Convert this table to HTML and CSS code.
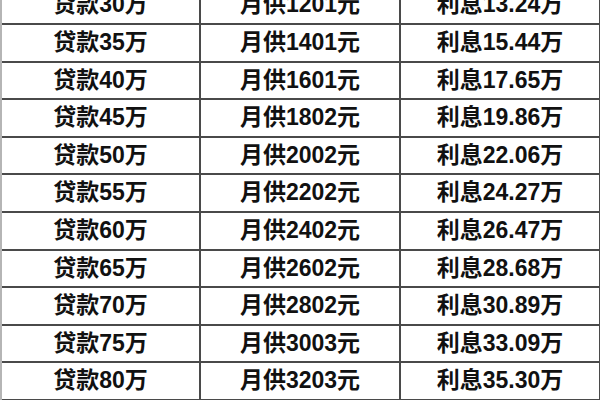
FILE: index.html
```html
<!DOCTYPE html>
<html lang="zh-CN">
<head>
<meta charset="utf-8">
<link rel="stylesheet" href="styles.css">
</head>
<body>
<div class="wrap">
<table class="loan">
<tbody>
<tr><td>贷款30万</td><td>月供1201元</td><td>利息13.24万</td></tr>
<tr><td>贷款35万</td><td>月供1401元</td><td>利息15.44万</td></tr>
<tr><td>贷款40万</td><td>月供1601元</td><td>利息17.65万</td></tr>
<tr><td>贷款45万</td><td>月供1802元</td><td>利息19.86万</td></tr>
<tr><td>贷款50万</td><td>月供2002元</td><td>利息22.06万</td></tr>
<tr><td>贷款55万</td><td>月供2202元</td><td>利息24.27万</td></tr>
<tr><td>贷款60万</td><td>月供2402元</td><td>利息26.47万</td></tr>
<tr><td>贷款65万</td><td>月供2602元</td><td>利息28.68万</td></tr>
<tr><td>贷款70万</td><td>月供2802元</td><td>利息30.89万</td></tr>
<tr><td>贷款75万</td><td>月供3003元</td><td>利息33.09万</td></tr>
<tr><td>贷款80万</td><td>月供3203元</td><td>利息35.30万</td></tr>
</tbody>
</table>
</div>
</body>
</html>
```

FILE: styles.css
```css
html, body {
  margin: 0;
  padding: 0;
  background: #ffffff;
}
.wrap {
  width: 600px;
  height: 400px;
  overflow: hidden;
  border-left: 2px solid #b5b5b5;
  box-sizing: border-box;
}
.loan {
  border-collapse: collapse;
  margin-top: -14.6px;
  width: 595px;
  table-layout: fixed;
  font-family: "Liberation Sans", "Noto Sans CJK SC", sans-serif;
  font-weight: bold;
  font-size: 23px;
  color: #111111;
}
.loan td {
  border: 2px solid #4a4a4a;
  border-left: none;
  height: 35.6px;
  padding: 0;
  text-align: center;
  vertical-align: middle;
  width: 198px;
  line-height: 1.2;
}
.loan td:first-child {
  width: 197px;
}
```
